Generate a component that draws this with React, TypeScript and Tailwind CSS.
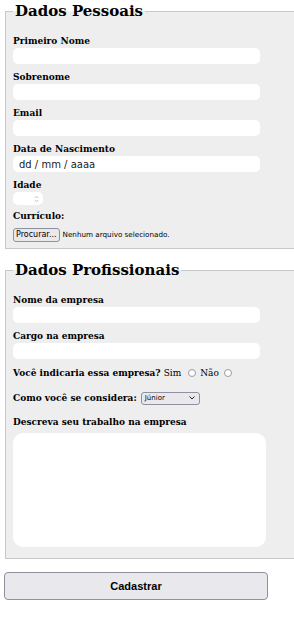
import React from "react";

const serif = "font-['DejaVu_Serif',serif]";
const sans = "font-['DejaVu_Sans',sans-serif]";
const labelCls = `block text-[9px] leading-[14px] font-bold text-black ${serif}`;

function Field({ label, children }: { label: string; children: React.ReactNode }) {
  return (
    <div className="mb-[6px]">
      <label className={labelCls}>{label}</label>
      {children}
    </div>
  );
}

function TextInput() {
  return <input type="text" className="block h-4 w-[247px] rounded-[5px] bg-white outline-none" />;
}

function Radio() {
  return <span className="inline-block h-[8px] w-[8px] rounded-full border border-[#9a9aa5] bg-white" />;
}

export default function App() {
  return (
    <div className="w-[294px] overflow-hidden bg-white pb-[18px]">
      <form>
        {/* Dados pessoais */}
        <fieldset className="ml-[5px] w-[300px] border border-[#c8c8c8] bg-[#eeeeee] pb-[6px] pl-[7px] pr-2">
          <legend className={`px-[2px] text-[15px] leading-[22px] font-bold text-black ${serif}`}>Dados Pessoais</legend>
          <div className="pt-3">
            <Field label="Primeiro Nome">
              <TextInput />
            </Field>
            <Field label="Sobrenome">
              <TextInput />
            </Field>
            <Field label="Email">
              <TextInput />
            </Field>
            <Field label="Data de Nascimento">
              <div className={`flex h-4 w-[247px] items-center rounded-[5px] bg-white pl-[6px] text-[10px] text-[#222] ${sans}`}>
                dd / mm / aaaa
              </div>
            </Field>
            <div className="mb-[4px]">
              <label className={labelCls}>Idade</label>
              <div className="flex h-[13px] w-[30px] items-center justify-end rounded-[5px] bg-white pr-[4px]">
                <svg width="5" height="8" viewBox="0 0 5 8" fill="none" stroke="#b5b5b5" strokeWidth="0.8">
                  <path d="M0.8 3 L2.5 1.2 L4.2 3" />
                  <path d="M0.8 5 L2.5 6.8 L4.2 5" />
                </svg>
              </div>
            </div>
            <label className={labelCls}>Currículo:</label>
            <div className={`mt-[5px] flex items-center gap-[3px] text-[8px] text-black ${sans}`}>
              <span className="flex h-[14px] items-center rounded-[3px] border border-[#8f8f9d] bg-[#e9e9ed] px-[2px]">
                Procurar...
              </span>
              <span className="text-[7.2px]">Nenhum arquivo selecionado.</span>
            </div>
          </div>
        </fieldset>

        {/* Dados profissionais */}
        <fieldset className="mt-[10px] ml-[5px] w-[300px] border border-[#c8c8c8] bg-[#eeeeee] pb-[11px] pl-[7px] pr-2">
          <legend className={`px-[2px] text-[15px] leading-[22px] font-bold text-black ${serif}`}>Dados Profissionais</legend>
          <div className="pt-3">
            <Field label="Nome da empresa">
              <TextInput />
            </Field>
            <Field label="Cargo na empresa">
              <TextInput />
            </Field>
            <div className={`mt-[7px] flex items-center text-[9px] leading-[14px] text-black ${serif}`}>
              <span className="font-bold">Você indicaria essa empresa?</span>
              <span className="ml-[3px]">Sim</span>
              <span className="ml-[7px] flex"><Radio /></span>
              <span className="ml-[4px]">Não</span>
              <span className="ml-[5px] flex"><Radio /></span>
            </div>
            <div className={`mt-[11px] flex items-center gap-[4px] text-[9px] leading-[14px] text-black ${serif}`}>
              <span className="font-bold">Como você se considera:</span>
              <span className={`flex h-[13px] w-[59px] items-center justify-between rounded-[3px] border border-[#8f8f9d] bg-[#e9e9ed] pl-[3px] pr-[4px] text-[7px] font-normal ${sans}`}>
                Júnior
                <svg width="6" height="4" viewBox="0 0 6 4" fill="none" stroke="#222" strokeWidth="1">
                  <path d="M0.5 0.5 L3 3 L5.5 0.5" />
                </svg>
              </span>
            </div>
            <label className={`mt-[10px] ${labelCls}`}>Descreva seu trabalho na empresa</label>
            <textarea className="mt-[4px] block h-[114px] w-[253px] resize-none rounded-[10px] bg-white outline-none" />
          </div>
        </fieldset>

        <button
          type="button"
          className="mt-[13px] ml-[4px] flex h-[28px] w-[264px] items-center justify-center rounded-[4px] border border-[#8f8f9d] bg-[#e9e9ed] font-['Liberation_Sans',sans-serif] text-[11px] font-bold text-black"
        >
          Cadastrar
        </button>
      </form>
    </div>
  );
}
